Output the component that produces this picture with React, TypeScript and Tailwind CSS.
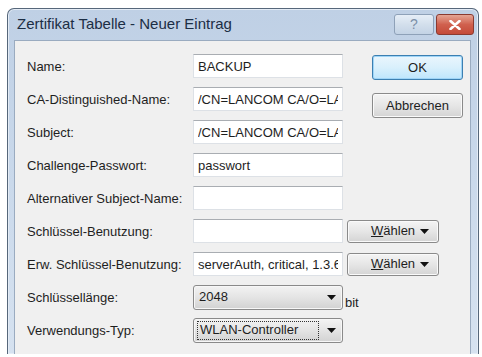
import React from 'react';

const labelCls = "w-[166px] shrink-0 whitespace-nowrap text-[13px] leading-none text-[#1e1e1e]";

const Arrow = () => (
  <svg width="9" height="5" viewBox="0 0 9 5" className="shrink-0">
    <path d="M0 0 H9 L4.5 5 Z" fill="#111" />
  </svg>
);

const Row = ({ label, children }: { label: string; children?: React.ReactNode }) => (
  <div className="flex h-[24px] items-center">
    <span className={labelCls}>{label}</span>
    {children}
  </div>
);

const Field = ({ value = '' }: { value?: string }) => (
  <input
    readOnly
    value={value}
    className="h-[24px] w-[150px] shrink-0 border border-[#dde1e6] border-t-[#a9adb2] bg-white px-[4px] text-[13px] text-[#1e1e1e] outline-none"
  />
);

const WinButton = ({ children, className = '' }: { children: React.ReactNode; className?: string }) => (
  <button
    className={`flex items-center rounded-[3px] border border-[#8a8a8a] bg-gradient-to-b from-[#f4f4f4] via-[#e6e6e6] to-[#d4d4d4] text-[13px] text-[#1e1e1e] shadow-[inset_0_0_0_1px_#fafafa] ${className}`}
  >
    {children}
  </button>
);

const Waehlen = () => (
  <WinButton className="ml-[4px] h-[23px] w-[92px] justify-between pl-[23px] pr-[9px]">
    <span><span className="underline">W</span>ählen</span>
    <Arrow />
  </WinButton>
);

const Select = ({ value, focus }: { value: string; focus?: boolean }) => (
  <div className="flex h-[25px] w-[150px] shrink-0 items-center justify-between rounded-[3px] border border-[#8a8a8a] bg-gradient-to-b from-[#f3f3f3] via-[#e4e4e4] to-[#d2d2d2] pl-[3px] pr-[6px] text-[13px] text-[#1e1e1e] shadow-[inset_0_0_0_1px_#f7f7f7]">
    {focus ? (
      <span className="flex h-[19px] w-[122px] items-center border border-dotted border-[#333] pl-[2px]">{value}</span>
    ) : (
      <span className="pl-[2px]">{value}</span>
    )}
    <Arrow />
  </div>
);

export default function App() {
  return (
    <div className="h-[357px] w-[482px] overflow-hidden bg-white pl-[7px] pt-[8px]" style={{ fontFamily: '"Liberation Sans", Arial, sans-serif' }}>
      <div className="flex h-[346px] w-[472px] flex-col rounded-t-[7px] border border-b-0 border-[#56677a] bg-gradient-to-b from-[#bfd0e5] via-[#cad9eb] to-[#d6e2f0] shadow-[inset_0_0_0_1px_#e4ecf6]">
        {/* Title bar */}
        <div className="flex h-[31px] shrink-0 items-start pl-[9px] pr-[4px]">
          <span className="mt-[7px] text-[15px] leading-none text-[#1c2e45]">Zertifikat Tabelle - Neuer Eintrag</span>
          <div className="ml-auto mt-[5px] flex gap-[2px]">
            <div className="flex h-[21px] w-[40px] items-center justify-center rounded-[3px] border border-[#8ea1b8] bg-gradient-to-b from-[#e6eef7] via-[#d3dfec] to-[#c3d3e5] text-[14px] text-[#7d90a8]">?</div>
            <div className="flex h-[21px] w-[38px] items-center justify-center rounded-[3px] border border-[#8a3a30] bg-gradient-to-b from-[#e4a595] via-[#d0604e] to-[#c44a38]">
              <svg width="12" height="10" viewBox="0 0 12 10">
                <path d="M1.5 1 L10.5 9 M10.5 1 L1.5 9" stroke="#fff" strokeWidth="2.6" strokeLinecap="round" />
              </svg>
            </div>
          </div>
        </div>

        {/* Content */}
        <div className="ml-[6px] mr-[7px] flex-1 border border-b-0 border-[#9aabc0] bg-[#f0f0f0] pl-[12px] pt-[13px]">
          <div className="flex">
            <div className="flex flex-col gap-[9px]">
              <Row label="Name:"><Field value="BACKUP" /></Row>
              <Row label="CA-Distinguished-Name:"><Field value="/CN=LANCOM CA/O=LANCOM SYSTEMS" /></Row>
              <Row label="Subject:"><Field value="/CN=LANCOM CA/O=LANCOM SYSTEMS" /></Row>
              <Row label="Challenge-Passwort:"><Field value="passwort" /></Row>
              <Row label="Alternativer Subject-Name:"><Field /></Row>
            </div>
            <div className="ml-[29px] flex flex-col gap-[13px] pt-[1px]">
              <button className="flex h-[25px] w-[91px] items-center justify-center rounded-[3px] border border-[#3c7fb1] bg-gradient-to-b from-[#eaf6fd] via-[#d9f0fc] to-[#bee6fd] text-[13px] text-[#1e1e1e] shadow-[inset_0_0_0_1px_#9fd5f7]">OK</button>
              <WinButton className="h-[25px] w-[91px] justify-center">Abbrechen</WinButton>
            </div>
          </div>
          <div className="mt-[9px] flex flex-col gap-[9px]">
            <Row label="Schlüssel-Benutzung:"><Field /><Waehlen /></Row>
            <Row label="Erw. Schlüssel-Benutzung:"><Field value="serverAuth, critical, 1.3.6.1.5.5.8.2.2" /><Waehlen /></Row>
            <Row label="Schlüssellänge:">
              <Select value="2048" />
              <span className="ml-[2px] self-end text-[13px] leading-none text-[#1e1e1e]">bit</span>
            </Row>
            <Row label="Verwendungs-Typ:"><Select value="WLAN-Controller" focus /></Row>
          </div>
        </div>
      </div>
    </div>
  );
}
